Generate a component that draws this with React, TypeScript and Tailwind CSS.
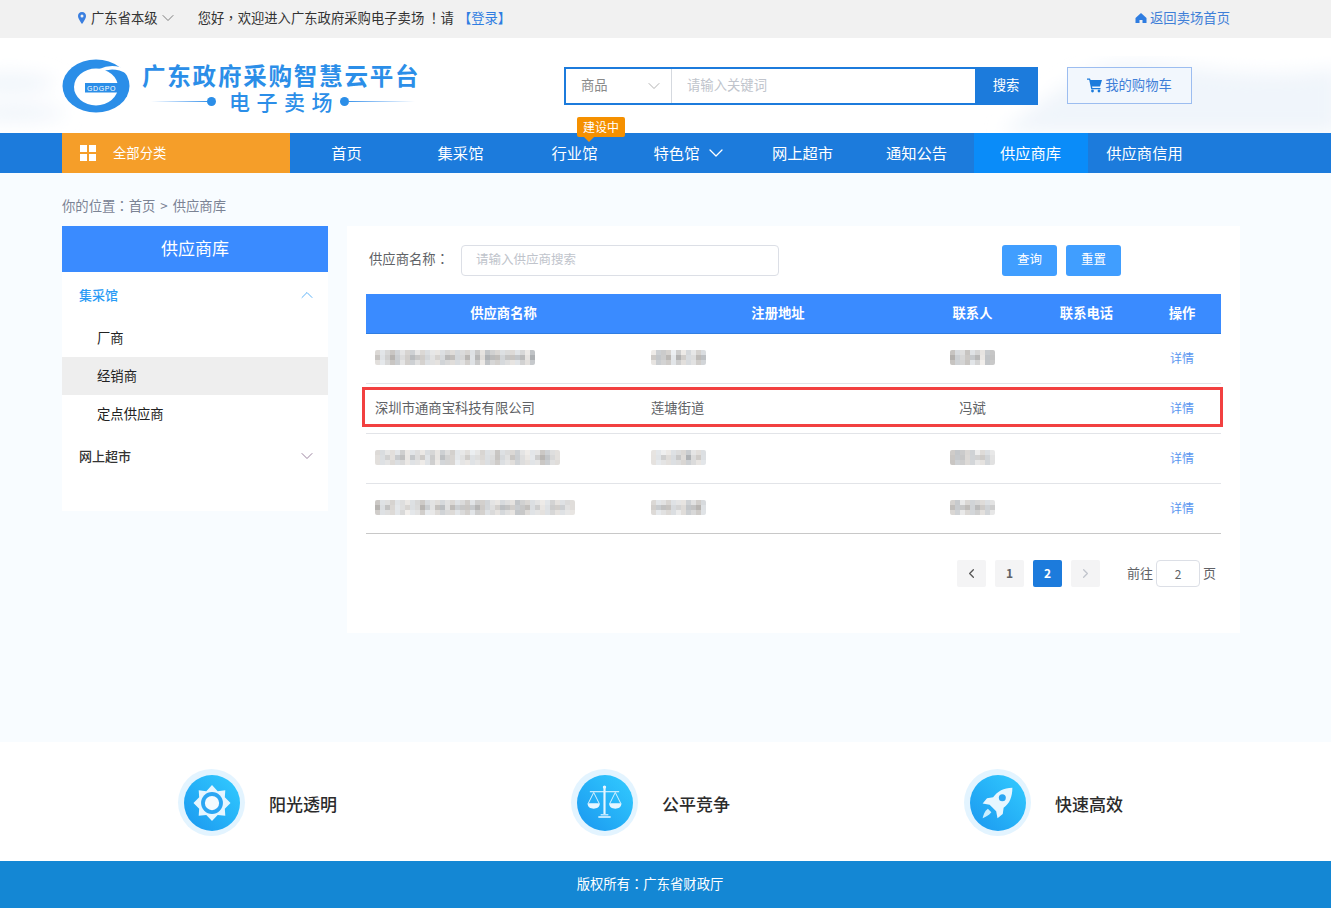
import React from 'react';
import { ChevronDown, ChevronUp, ChevronLeft, ChevronRight } from 'lucide-react';

const navItems = ['首页', '集采馆', '行业馆', '特色馆', '网上超市', '通知公告', '供应商库', '供应商信用'];

// centred full-width punctuation, as in the reference font
const Punct: React.FC<{ children: React.ReactNode }> = ({ children }) => (
  <span className="font-['Noto_Sans_CJK_TC']">{children}</span>
);

// pixelated blocks for the blurred cells
const Mosaic: React.FC<{ width: number; seed: number }> = ({ width, seed }) => {
  const cols = Math.round(width / 5);
  const cells: string[] = [];
  let s = seed;
  const next = () => {
    s = (s * 9301 + 49297) % 233280;
    return s / 233280;
  };
  const bases = Array.from({ length: cols }, () => 200 + next() * 34);
  for (let r = 0; r < 3; r++) {
    for (let c = 0; c < cols; c++) {
      const n = next();
      const dark = r === 1 && n > 0.55 ? -28 : 0;
      const v = Math.round(bases[c] + dark + (n - 0.5) * 14);
      const tint = c % 3 === 0 ? 3 : c % 3 === 1 ? -3 : 0;
      cells.push(`rgb(${v + tint},${v},${v - tint})`);
    }
  }
  return (
    <div className="grid h-[15px] rounded-[2px] overflow-hidden" style={{ gridTemplateColumns: `repeat(${cols}, 5px)`, width: cols * 5 }}>
      {cells.map((c, i) => (
        <div key={i} className="h-[5px]" style={{ background: c }} />
      ))}
    </div>
  );
};

const Logo = () => (
  <svg width="68" height="54" viewBox="0 0 68 54" className="shrink-0">
    <ellipse cx="34" cy="27" rx="33.5" ry="26.5" fill="#2b8ee8" />
    <ellipse cx="34" cy="28" rx="22" ry="18.5" fill="#fff" />
    <path d="M38 11.5C48 7 60 8 69 16" fill="none" stroke="#fff" strokeWidth="3.5" />
    <path d="M23 24H56V33.5H23Z" fill="#2b8ee8" />
    <text x="25" y="31.5" fontSize="7" fontFamily="Liberation Sans, sans-serif" fill="#fff" letterSpacing="0.6">GDGPO</text>
  </svg>
);

const SunIcon = () => (
  <svg width="38" height="38" viewBox="0 0 40 40">
    <path d="M20 1L26 7.5L34 6.5L33.5 14L39.5 20L33.5 26L34 33.5L26 32.5L20 39L14 32.5L6 33.5L6.5 26L.5 20L6.5 14L6 6.5L14 7.5Z" fill="#e6f6ff" />
    <circle cx="20" cy="20" r="11.5" fill="#2aa6f3" />
    <circle cx="20" cy="20" r="7.5" fill="#f2fbff" />
  </svg>
);

const ScaleIcon = () => (
  <svg width="37" height="37" viewBox="0 0 48 48" fill="none">
    <path d="M24 3V39" stroke="#e6f6ff" strokeWidth="2.8" />
    <circle cx="24" cy="4" r="2.2" fill="#e6f6ff" />
    <path d="M5 10H43" stroke="#e6f6ff" strokeWidth="1.4" />
    <path d="M10 11L3 25M10 11L17 25M38 11L31 25M38 11L45 25" stroke="#e6f6ff" strokeWidth="1.2" />
    <path d="M2 25H18C18 30 14 32 10 32C6 32 2 30 2 25ZM30 25H46C46 30 42 32 38 32C34 32 30 30 30 25Z" fill="#e6f6ff" />
    <path d="M19 39H29V41H19ZM16 41.5H32V44H16Z" fill="#b9e6ff" />
  </svg>
);

const RocketIcon = () => (
  <svg width="35" height="35" viewBox="0 0 40 40">
    <path d="M37 3C27 3 20 7 15 14L8 15L3 21L11 22.5L18.5 30L20 38L26 33L27 26C34 21 37 13 37 3Z" fill="#e6f6ff" />
    <circle cx="25.5" cy="14.5" r="4" fill="#2aa6f3" />
    <path d="M9 27L13 31C10 35 6 36 3 38C4 34 5 30 9 27Z" fill="#cbeeff" />
  </svg>
);

const Feature: React.FC<{ title: string; children: React.ReactNode }> = ({ title, children }) => (
  <div className="w-[393px] shrink-0 flex items-center">
    <div className="w-[67px] h-[67px] rounded-full bg-[#e3f4ff] flex items-center justify-center">
      <div className="w-[56px] h-[56px] rounded-full bg-gradient-to-tr from-[#1c97ef] to-[#33ccff] flex items-center justify-center">
        {children}
      </div>
    </div>
    <span className="ml-[24px] mt-[3px] text-[17px] font-medium text-[#2b2b2b]">{title}</span>
  </div>
);

const rows = [
  { seed: 11, nameW: 160, addrW: 55, contactW: 45 },
  { name: '深圳市通商宝科技有限公司', addr: '莲塘街道', contact: '冯斌' },
  { seed: 37, nameW: 185, addrW: 55, contactW: 45 },
  { seed: 73, nameW: 200, addrW: 55, contactW: 45 },
];

const App: React.FC = () => {
  return (
    <div className="min-h-[908px] bg-[#f8fcff] font-['Noto_Sans_CJK_SC','Liberation_Sans',sans-serif] text-[13.33px]">
      {/* Top bar */}
      <div className="h-[38px] bg-[#f1f1f1] flex items-center pl-[77px] pr-[101px] pb-[2px] text-[#333]">
        <svg width="10" height="12" viewBox="0 0 10 12" className="mr-[4px]">
          <path fillRule="evenodd" d="M5 0C2.4 0 1 1.9 1 4C1 6.8 5 12 5 12S9 6.8 9 4C9 1.9 7.6 0 5 0ZM5 2.5A1.5 1.5 0 1 1 5 5.5A1.5 1.5 0 1 1 5 2.5Z" fill="#3a7fe0" />
        </svg>
        <span>广东省本级</span>
        <ChevronDown size={20} strokeWidth={1} className="text-[#666]" />
        <span className="ml-[20px]">您好<Punct>，</Punct>欢迎进入广东政府采购电子卖场 <Punct>！</Punct>请</span>
        <span className="ml-[4px] text-[#2f7de1]">【登录】</span>
        <div className="ml-auto flex items-center text-[#3f7fd8]">
          <svg width="12" height="12" viewBox="0 0 12 12" className="mr-[3px]">
            <path d="M6 1L11.5 6V11H7.5V8H4.5V11H.5V6Z" fill="#2f7de1" />
          </svg>
          返回卖场首页
        </div>
      </div>

      {/* Header */}
      <div className="relative h-[95px] bg-white overflow-hidden">
        <svg className="absolute inset-0" width="1331" height="95">
          <defs>
            <filter id="cloud"><feGaussianBlur stdDeviation="9" /></filter>
          </defs>
          <g filter="url(#cloud)" fill="#f0f5fb">
            <ellipse cx="10" cy="45" rx="45" ry="10" />
            <ellipse cx="15" cy="75" rx="50" ry="9" />
            <path d="M1000 95C1060 50 1090 25 1130 25C1190 25 1250 45 1340 30V95Z" />
          </g>
        </svg>
        <div className="relative ml-[62px] h-full flex items-start">
          <div className="flex pt-[21px]">
            <Logo />
            <div className="ml-[12px] w-[276px] mt-[2px] flex flex-col">
              <span className="text-[23.5px] leading-[28px] font-bold tracking-[1.8px] text-[#2b8ee8] whitespace-nowrap">广东政府采购智慧云平台</span>
              <div className="flex items-center text-[#2b8ee8]">
                <div className="ml-[9px] w-[56px] h-[1px] bg-gradient-to-r from-white to-[#3a95ea]" />
                <div className="w-[9px] h-[9px] rounded-full bg-[#2b8ee8]" />
                <span className="ml-[13px] text-[21px] leading-[24px] font-medium tracking-[6.5px] whitespace-nowrap">电子卖场</span>
                <div className="ml-[1px] w-[9px] h-[9px] rounded-full bg-[#2b8ee8]" />
                <div className="w-[66px] h-[1px] bg-gradient-to-r from-[#3a95ea] to-white" />
              </div>
            </div>
          </div>

          {/* Search */}
          <div className="ml-[146px] mt-[29px] w-[474px] h-[38px] flex border-2 border-[#1c7bdc] bg-white">
            <div className="w-[106px] flex items-center pl-[15px] pr-[7px] pb-[2px] border-r border-[#d5d9df] text-[#8a8a8a]">
              商品
              <ChevronDown size={20} strokeWidth={0.9} className="ml-auto mt-[2px] text-[#999]" />
            </div>
            <div className="flex-1 flex items-center pl-[15px] pb-[2px] text-[#c0c4cc]">请输入关键词</div>
            <div className="w-[62px] -mr-px bg-[#1c7bdc] text-white flex items-center justify-center pb-[2px]">搜索</div>
          </div>

          <div className="ml-[29px] mt-[29px] w-[125px] h-[37px] flex items-center justify-center pb-[2px] border border-[#9cbdf0] bg-[#f2f7fd] text-[#3f7fd8]">
            <svg width="16" height="16" viewBox="0 0 16 16" className="mr-[2px]">
              <path d="M0 1.5H3L3.6 3H15L13 9.5H5L5.4 11H13.5V12.3H4.2L2.2 2.8H0Z" fill="#1c7bdc" />
              <circle cx="5.5" cy="14" r="1.4" fill="#1c7bdc" />
              <circle cx="12" cy="14" r="1.4" fill="#1c7bdc" />
            </svg>
            我的购物车
          </div>
        </div>
      </div>

      {/* Nav */}
      <div className="h-[40px] bg-[#1c7bdc] pl-[62px] flex text-white">
        <div className="w-[228px] bg-[#f59e29] flex items-center pl-[18px]">
          <div className="grid grid-cols-2 gap-[2px] w-[16px] h-[16px]">
            <div className="bg-white" />
            <div className="bg-white" />
            <div className="bg-white" />
            <div className="bg-white" />
          </div>
          <span className="ml-[17px] pb-[1px]">全部分类</span>
        </div>
        {navItems.map((item) => (
          <div
            key={item}
            className={`relative w-[114px] flex items-center justify-center pb-[2px] text-[15.3px] ${item === '供应商库' ? 'bg-[#0a8cf9]' : ''} ${item === '特色馆' ? 'pl-[4px]' : 'pr-[1px]'}`}
          >
            {item}
            {item === '特色馆' && <ChevronDown size={24} strokeWidth={1.3} className="ml-[5px] mt-[2px]" />}
            {item === '行业馆' && (
              <div className="absolute left-[59px] -top-[16px] w-[48px] h-[20px] pb-[1px] rounded-[2px] bg-[#f59000] text-[12px] flex items-center justify-center">
                建设中
                <div className="absolute left-[7px] -bottom-[5px] w-0 h-0 border-x-[5px] border-x-transparent border-t-[5px] border-t-[#f59000]" />
              </div>
            )}
          </div>
        ))}
      </div>

      {/* Content */}
      <div className="h-[569px] ml-[62px] w-[1178px]">
        <div className="h-[53px] pt-[23px] leading-[20px] text-[#7b8394]">
          你的位置<Punct>：</Punct>首页<span className="mx-[5px]">&gt;</span>供应商库
        </div>
        <div className="flex items-start">
          {/* Sidebar */}
          <div className="w-[266px] h-[285px] bg-white">
            <div className="h-[46px] pb-[2px] bg-[#3a8bff] text-white text-[17px] flex items-center justify-center">供应商库</div>
            <div className="h-[47px] pb-[1px] flex items-center pl-[17px] pr-[11px] text-[13px] font-medium text-[#2a9bf5]">
              集采馆
              <ChevronUp size={20} strokeWidth={0.9} className="ml-auto" />
            </div>
            <div className="h-[38px] flex items-center pl-[35px] text-[#222]">厂商</div>
            <div className="h-[38px] flex items-center pl-[35px] bg-[#eeeeee] text-[#222]">经销商</div>
            <div className="h-[38px] flex items-center pl-[35px] text-[#222]">定点供应商</div>
            <div className="h-[46px] flex items-center pl-[17px] pr-[11px] text-[13px] font-medium text-[#333]">
              网上超市
              <ChevronDown size={20} strokeWidth={0.9} className="ml-auto text-[#7a5a80]" />
            </div>
          </div>

          {/* Main */}
          <div className="ml-[19px] w-[893px] h-[407px] bg-white pt-[19px] pl-[19px] pr-[19px]">
            <div className="flex items-center h-[31px] text-[#606266]">
              <span className="ml-[3px] w-[92px] pb-[3px]">供应商名称<Punct>：</Punct></span>
              <div className="w-[318px] h-[31px] border border-[#dcdfe6] rounded-[4px] flex items-center pl-[14px] pb-[2px] text-[12.5px] text-[#c0c4cc]">请输入供应商搜索</div>
              <button className="ml-[223px] w-[55px] h-[31px] pb-[2px] rounded-[3px] bg-[#409eff] text-[12.5px] text-white">查询</button>
              <button className="ml-[9px] w-[55px] h-[31px] pb-[2px] rounded-[3px] bg-[#409eff] text-[12.5px] text-white">重置</button>
            </div>

            <div className="mt-[18px] w-[855px]">
              <div className="h-[40px] pb-[2px] bg-[#3a8bff] border-b border-[#2f7de1] text-white font-bold grid grid-cols-[275px_274px_115px_113px_78px] items-center text-center">
                <span>供应商名称</span>
                <span>注册地址</span>
                <span>联系人</span>
                <span>联系电话</span>
                <span>操作</span>
              </div>
              {rows.map((row, i) => (
                <div
                  key={i}
                  className={`relative h-[50px] pb-[2px] border-b grid grid-cols-[275px_274px_115px_113px_78px] items-center text-[#606266] ${i === 3 ? 'border-[#c8c8c8]' : 'border-[#e2e4e8]'}`}
                >
                  <div className="pl-[9px]">{row.name ?? <Mosaic width={row.nameW!} seed={row.seed!} />}</div>
                  <div className="pl-[10px]">{row.addr ?? <Mosaic width={row.addrW!} seed={row.seed! + 5} />}</div>
                  <div className="flex justify-center">{row.contact ?? <Mosaic width={row.contactW!} seed={row.seed! + 9} />}</div>
                  <div />
                  <div className="text-center text-[12px] text-[#5a96f0]">详情</div>
                  {row.name && <div className="absolute -left-[4px] -right-[2px] top-[3px] h-[40px] border-[3px] border-[#f24040]" />}
                </div>
              ))}
            </div>

            {/* Pagination */}
            <div className="mt-[26px] w-[855px] pr-[5px] flex items-center justify-end text-[12px] text-[#606266]">
              <div className="w-[29px] h-[27px] rounded-[2px] bg-[#f4f4f5] flex items-center justify-center text-[#555]">
                <ChevronLeft size={15} strokeWidth={2} />
              </div>
              <div className="ml-[9px] w-[29px] h-[27px] pb-[2px] rounded-[2px] bg-[#f4f4f5] flex items-center justify-center font-bold text-[#606266]">1</div>
              <div className="ml-[9px] w-[29px] h-[27px] pb-[2px] rounded-[2px] bg-[#1c7bdc] flex items-center justify-center font-bold text-white">2</div>
              <div className="ml-[9px] w-[29px] h-[27px] rounded-[2px] bg-[#f4f4f5] flex items-center justify-center text-[#c0c4cc]">
                <ChevronRight size={15} strokeWidth={2} />
              </div>
              <span className="ml-[27px] text-[13px] pb-[1px]">前往</span>
              <div className="ml-[3px] w-[44px] h-[27px] border border-[#dcdfe6] rounded-[4px] flex items-center justify-center">2</div>
              <span className="ml-[3px] text-[13px] pb-[1px]">页</span>
            </div>
          </div>
        </div>
      </div>

      {/* Features */}
      <div className="h-[119px] bg-white pl-[178px] pt-[2px] flex items-center">
        <Feature title="阳光透明"><SunIcon /></Feature>
        <Feature title="公平竞争"><ScaleIcon /></Feature>
        <Feature title="快速高效"><RocketIcon /></Feature>
      </div>

      {/* Footer */}
      <div className="h-[47px] pb-[2px] bg-[#1487d4] text-white flex items-center justify-center pr-[31px]">
        版权所有<Punct>：</Punct>广东省财政厅
      </div>
    </div>
  );
};

export default App;
